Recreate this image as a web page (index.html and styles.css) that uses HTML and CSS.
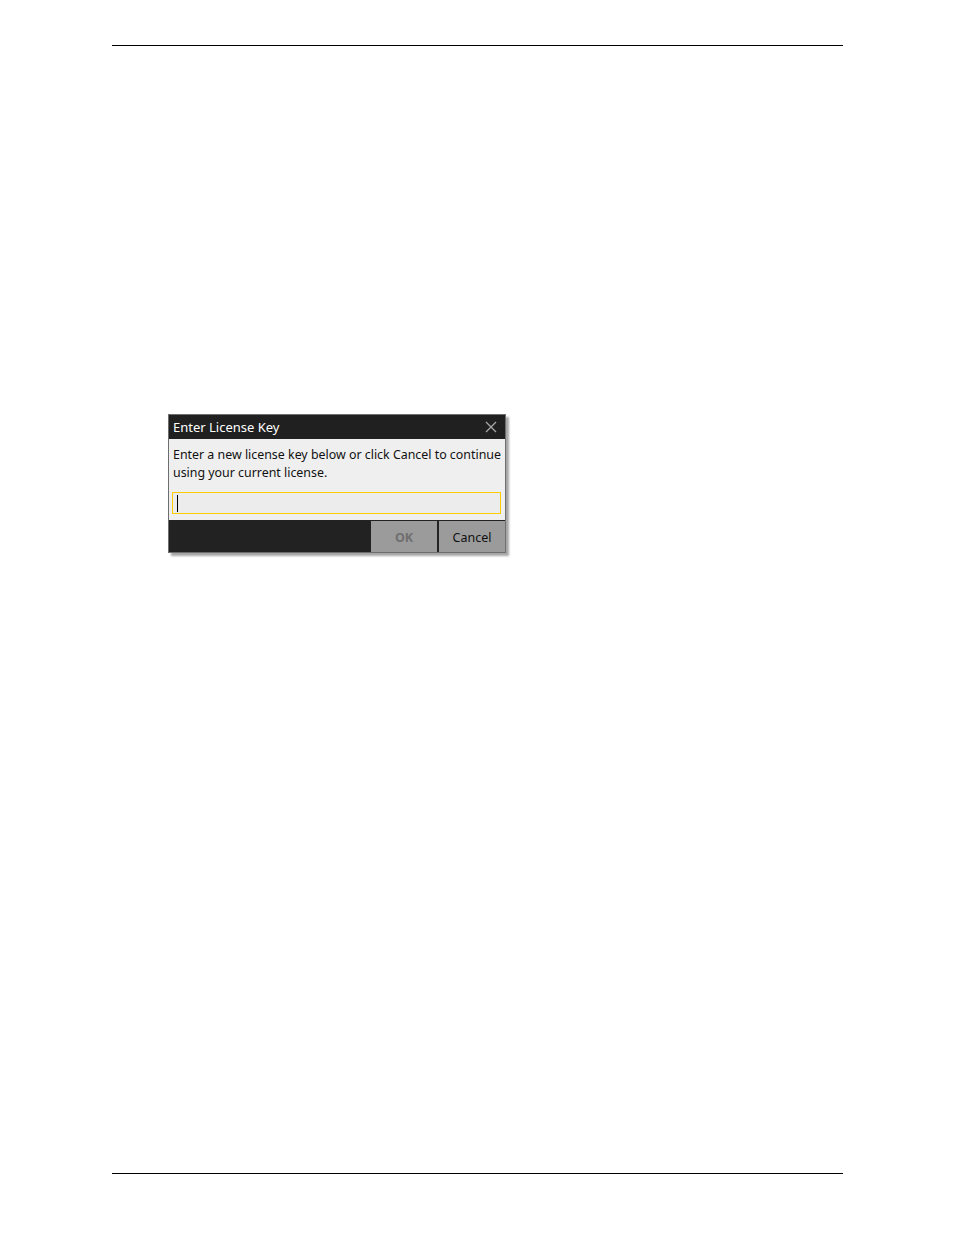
FILE: index.html
```html
<!DOCTYPE html>
<html>
<head>
<meta charset="utf-8">
<link rel="stylesheet" href="styles.css">
</head>
<body>
<div class="page">
  <div class="rule rule-top"></div>
  <div class="dialog">
    <div class="titlebar">
      <span class="title">Enter License Key</span>
      <svg class="close" width="12" height="12" viewBox="0 0 12 12"><path d="M1 1 L11 11 M11 1 L1 11" stroke="#a8a8a8" stroke-width="1.3" fill="none"/></svg>
    </div>
    <div class="content">
      <p class="msg">Enter a new license key below or click Cancel to continue<br>using your current license.</p>
      <div class="input"><span class="caret"></span></div>
    </div>
    <div class="footer">
      <div class="btn btn-ok">OK</div>
      <div class="btn btn-cancel">Cancel</div>
    </div>
  </div>
  <div class="rule rule-bottom"></div>
</div>
</body>
</html>
```
FILE: styles.css
```css
html, body {
  margin: 0;
  padding: 0;
  background: #ffffff;
}
.page {
  width: 954px;
  height: 1235px;
  padding: 45px 0 0 112px;
  box-sizing: border-box;
  font-family: "Noto Sans", "Open Sans", sans-serif;
}
.rule {
  width: 731px;
  height: 1px;
  background: #000;
}
.dialog {
  margin: 368px 0 0 56px;
  width: 338px;
  border: 1px solid #6e6e6e;
  box-sizing: border-box;
  box-shadow: 3px 3px 2px rgba(0,0,0,0.35);
  display: flex;
  flex-direction: column;
}
.titlebar {
  height: 24px;
  background: #202020;
  display: flex;
  align-items: center;
  justify-content: space-between;
  padding: 0 8px 0 4px;
}
.title {
  color: #ffffff;
  font-size: 13px;
  line-height: 24px;
}
.close {
  display: block;
}
.content {
  background: #efefef;
  padding: 7px 2px 6px 3px;
}
.msg {
  margin: 0 0 10px 1px;
  font-size: 12.4px;
  line-height: 18px;
  color: #111;
  white-space: nowrap;
}
.input {
  height: 22px;
  border: 1px solid #ffcc00;
  box-sizing: border-box;
  background: #ececec;
  display: flex;
  align-items: center;
  padding-left: 4px;
  margin-right: 2px;
}
.caret {
  width: 1px;
  height: 17px;
  background: #000;
}
.footer {
  height: 32px;
  background: #222222;
  display: flex;
  justify-content: flex-end;
  gap: 2px;
  padding: 1px 0 0 0;
  box-sizing: border-box;
}
.btn {
  width: 66px;
  background: #9b9b9b;
  display: flex;
  align-items: center;
  justify-content: center;
  font-size: 12.5px;
  padding-top: 1px;
}
.btn-ok {
  color: #6f6f6f;
  font-weight: bold;
}
.btn-cancel {
  color: #111;
}
.rule-bottom {
  margin-top: 620px;
}
```
